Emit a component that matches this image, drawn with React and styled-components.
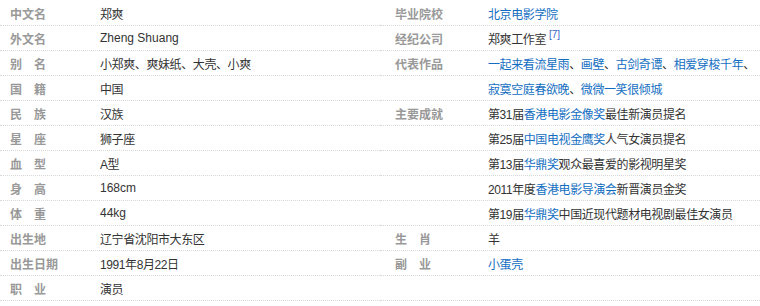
import styled, { createGlobalStyle } from 'styled-components';

const GlobalStyle = createGlobalStyle`
  body {
    margin: 0;
    background: #fff;
    font-family: "Liberation Sans", Arial, "Noto Sans CJK SC", sans-serif;
    font-size: 12px;
  }
`;

const InfoBox = styled.div`
  display: grid;
  grid-template-columns: 380px 380px;
  width: 760px;
  padding-top: 1px;
`;

const InfoColumn = styled.dl`
  margin: 0;
  display: flex;
  flex-direction: column;
`;

const InfoRow = styled.div`
  display: flex;
  align-items: center;
  height: 24px;
  border-bottom: 1px dotted #d8d8d8;
  padding-left: ${(p) => p.$indent}px;
`;

const Label = styled.dt`
  flex: none;
  width: ${(p) => p.$width}px;
  color: #999;
  font-weight: 700;
  letter-spacing: ${(p) => (p.$spaced ? '12px' : '0')};
  white-space: nowrap;
`;

const Value = styled.dd`
  margin: 0;
  color: #333;
  white-space: nowrap;
  letter-spacing: ${(p) => (p.$latin ? '0' : '-0.4px')};
`;

const TextLink = styled.a`
  color: #136ec2;
  text-decoration: none;
`;

const Ref = styled.sup`
  color: #3366cc;
  font-size: 10px;
  margin-left: 3px;
  vertical-align: 6px;
  line-height: 0;
  letter-spacing: 0;
`;

const L = (t) => <TextLink href="#">{t}</TextLink>;

const leftRows = [
  ['中文名', '郑爽'],
  ['外文名', 'Zheng Shuang'],
  ['别名', '小郑爽、爽妹纸、大壳、小爽'],
  ['国籍', '中国'],
  ['民族', '汉族'],
  ['星座', '狮子座'],
  ['血型', 'A型'],
  ['身高', '168cm'],
  ['体重', '44kg'],
  ['出生地', '辽宁省沈阳市大东区'],
  ['出生日期', '1991年8月22日'],
  ['职业', '演员'],
];

const rightRows = [
  ['毕业院校', L('北京电影学院')],
  ['经纪公司', <>郑爽工作室<Ref>[7]</Ref></>],
  ['代表作品', <>{L('一起来看流星雨')}、{L('画壁')}、{L('古剑奇谭')}、{L('相爱穿梭千年')}、</>],
  ['', <>{L('寂寞空庭春欲晚')}、{L('微微一笑很倾城')}</>],
  ['主要成就', <>第31届{L('香港电影金像奖')}最佳新演员提名</>],
  ['', <>第25届{L('中国电视金鹰奖')}人气女演员提名</>],
  ['', <>第13届{L('华鼎奖')}观众最喜爱的影视明星奖</>],
  ['', <>2011年度{L('香港电影导演会')}新晋演员金奖</>],
  ['', <>第19届{L('华鼎奖')}中国近现代题材电视剧最佳女演员</>],
  ['生肖', '羊'],
  ['副业', L('小蛋壳')],
  ['', ''],
];

const isLatin = (v) => typeof v === 'string' && /^[\x00-\x7f]+$/.test(v);

function Column({ rows, indent, labelWidth }) {
  return (
    <InfoColumn>
      {rows.map(([label, value], i) => (
        <InfoRow key={i} $indent={indent}>
          <Label $width={labelWidth} $spaced={label.length === 2}>
            {label}
          </Label>
          <Value $latin={isLatin(value)}>{value}</Value>
        </InfoRow>
      ))}
    </InfoColumn>
  );
}

export default function App() {
  return (
    <>
      <GlobalStyle />
      <InfoBox>
        <Column rows={leftRows} indent={10} labelWidth={90} />
        <Column rows={rightRows} indent={15} labelWidth={93} />
      </InfoBox>
    </>
  );
}
